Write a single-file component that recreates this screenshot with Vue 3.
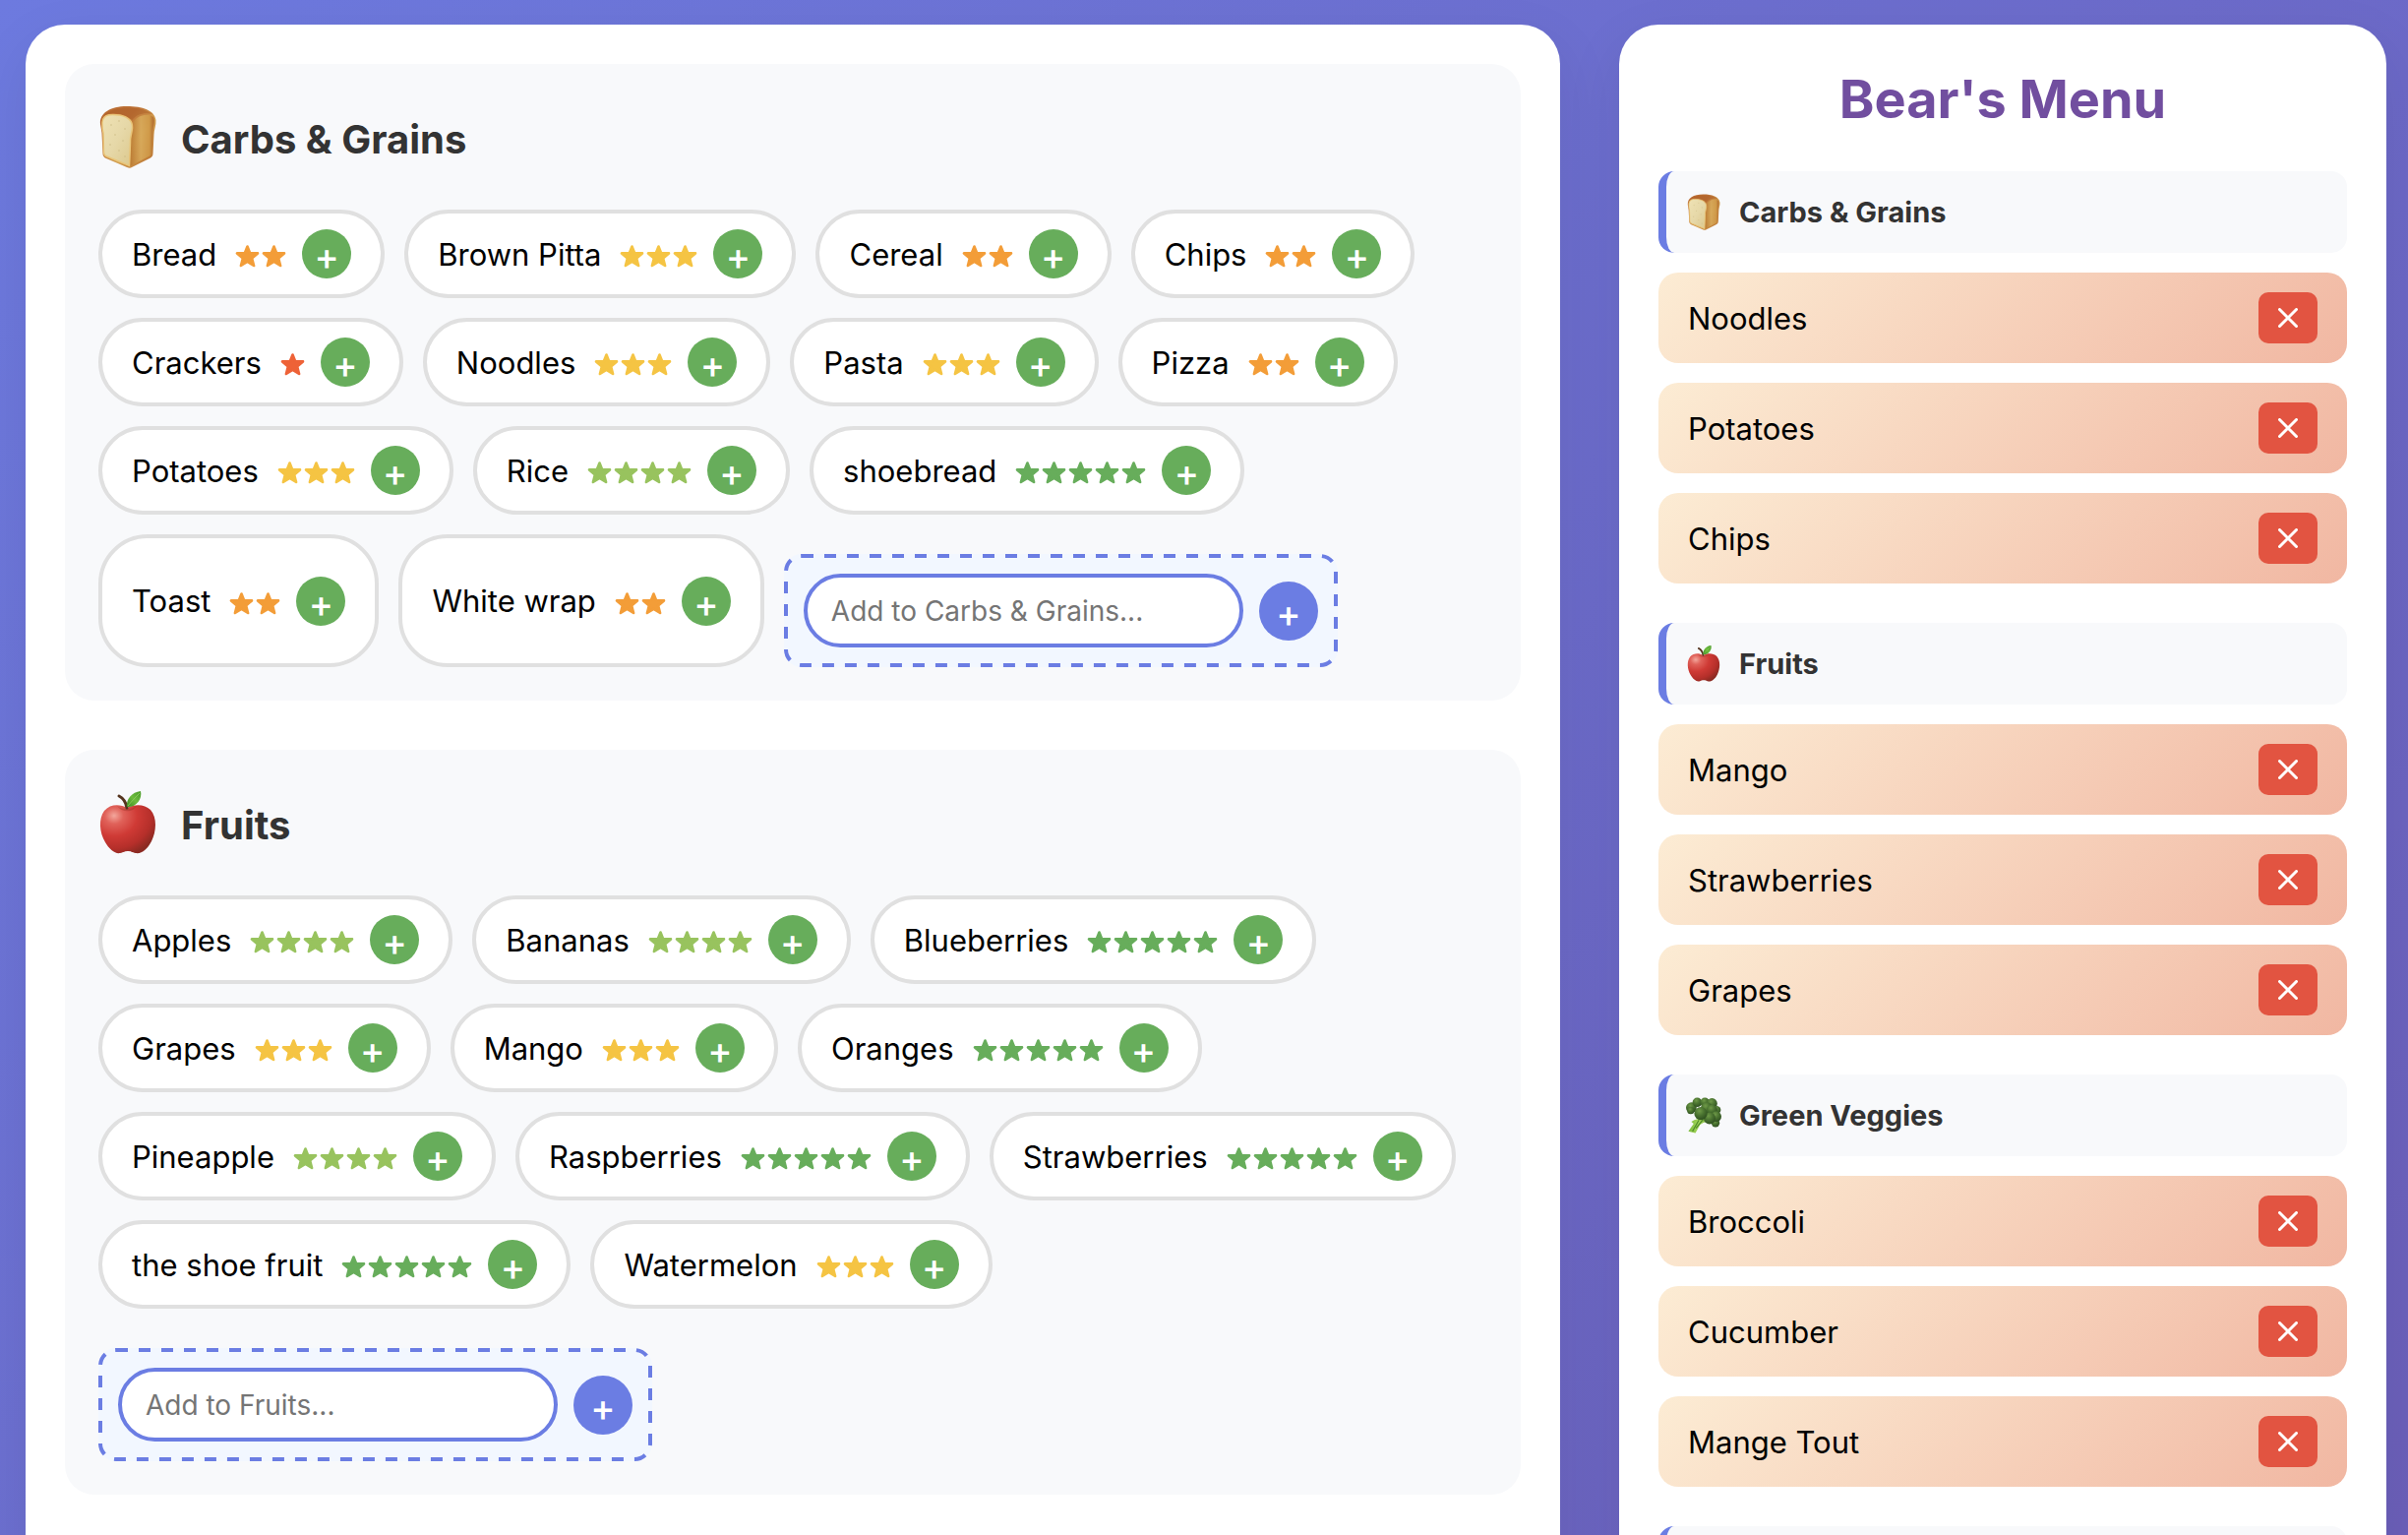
<script setup>
const categories = [
  {
    id: 'carbs',
    name: 'Carbs & Grains',
    foods: [
      { name: 'Bread', stars: 2 },
      { name: 'Brown Pitta', stars: 3 },
      { name: 'Cereal', stars: 2 },
      { name: 'Chips', stars: 2 },
      { name: 'Crackers', stars: 1 },
      { name: 'Noodles', stars: 3 },
      { name: 'Pasta', stars: 3 },
      { name: 'Pizza', stars: 2 },
      { name: 'Potatoes', stars: 3 },
      { name: 'Rice', stars: 4 },
      { name: 'shoebread', stars: 5 },
      { name: 'Toast', stars: 2 },
      { name: 'White wrap', stars: 2 },
    ],
  },
  {
    id: 'fruits',
    name: 'Fruits',
    foods: [
      { name: 'Apples', stars: 4 },
      { name: 'Bananas', stars: 4 },
      { name: 'Blueberries', stars: 5 },
      { name: 'Grapes', stars: 3 },
      { name: 'Mango', stars: 3 },
      { name: 'Oranges', stars: 5 },
      { name: 'Pineapple', stars: 4 },
      { name: 'Raspberries', stars: 5 },
      { name: 'Strawberries', stars: 5 },
      { name: 'the shoe fruit', stars: 5 },
      { name: 'Watermelon', stars: 3 },
    ],
  },
]

const menu = [
  { id: 'carbs', name: 'Carbs & Grains', items: ['Noodles', 'Potatoes', 'Chips'] },
  { id: 'fruits', name: 'Fruits', items: ['Mango', 'Strawberries', 'Grapes'] },
  { id: 'greens', name: 'Green Veggies', items: ['Broccoli', 'Cucumber', 'Mange Tout'] },
]
</script>

<template>
  <svg class="sprite" aria-hidden="true">
    <defs>
      <linearGradient id="crust" x1="0" y1="0" x2="1" y2="1">
        <stop offset="0" stop-color="#b9692f" />
        <stop offset="0.35" stop-color="#bd7236" />
        <stop offset="0.6" stop-color="#d3a050" />
        <stop offset="1" stop-color="#b4682a" />
      </linearGradient>
      <linearGradient id="crustSide" x1="0" y1="0" x2="1" y2="0">
        <stop offset="0" stop-color="#b8762f" />
        <stop offset="0.45" stop-color="#d8ab5c" />
        <stop offset="0.8" stop-color="#d09a48" />
        <stop offset="1" stop-color="#a95f28" />
      </linearGradient>
      <linearGradient id="crumb" x1="0" y1="0" x2="1" y2="1">
        <stop offset="0" stop-color="#efe2b4" />
        <stop offset="0.5" stop-color="#e6d8a8" />
        <stop offset="1" stop-color="#dcc88c" />
      </linearGradient>
      <radialGradient id="appleSkin" cx="0.25" cy="0.22" r="0.85">
        <stop offset="0" stop-color="#f3a79c" />
        <stop offset="0.2" stop-color="#e0625a" />
        <stop offset="0.5" stop-color="#cf3a35" />
        <stop offset="0.8" stop-color="#b52f2a" />
        <stop offset="1" stop-color="#8c2a22" />
      </radialGradient>
      <linearGradient id="leaf" x1="0" y1="1" x2="1" y2="0">
        <stop offset="0" stop-color="#3f8a24" />
        <stop offset="0.5" stop-color="#6cbb3c" />
        <stop offset="1" stop-color="#4a9a2a" />
      </linearGradient>
      <radialGradient id="floret" cx="0.4" cy="0.3" r="0.7">
        <stop offset="0" stop-color="#6f9a48" />
        <stop offset="0.5" stop-color="#4a7330" />
        <stop offset="1" stop-color="#2f5020" />
      </radialGradient>
      <linearGradient id="stalk" x1="0" y1="0" x2="1" y2="0">
        <stop offset="0" stop-color="#7cba3c" />
        <stop offset="0.5" stop-color="#a8d85c" />
        <stop offset="1" stop-color="#5c9a2c" />
      </linearGradient>
    </defs>
    <symbol id="icon-carbs" viewBox="0 0 58 64">
      <path d="M1 19C0 8 11 1 28 1C44 1 56 5 57.500 15C58 20 55.500 25 55.500 30L54.500 49C54.500 52 53 53 50 54.500L32 63.500Q30.500 64 28 63L7 54Q3.500 52.500 3.500 49L2.500 28Z" fill="url(#crust)" />
      <path d="M34 18C37 24 32 30 32 36L31 62L52 51Q53.500 50 53.500 47L54.500 27C54.500 21 57 17 55 12C49 8 38 10 34 18Z" fill="url(#crustSide)" opacity="0.85" />
      <path d="M3 17C4 8 14 9 21 10C30 12 34 16 33.500 23C33 29 31 32 31.500 38L30.500 61.500L7.500 52Q4.500 51 4.500 47L4 28C2.500 23 3 20 3 17Z" fill="url(#crumb)" stroke="#e9c579" stroke-width="1.500" />
      <path d="M5 10C14 1 42 0 54 9C44 7 37 10 33.500 15C26 8 13 6 5 10Z" fill="#a85a26" opacity="0.45" />
      <g fill="#cdbb84" opacity="0.5">
        <circle cx="12" cy="20" r="1" /><circle cx="20" cy="16" r="1" /><circle cx="26" cy="24" r="1" />
        <circle cx="16" cy="30" r="1" /><circle cx="24" cy="36" r="1" /><circle cx="11" cy="40" r="1" />
        <circle cx="20" cy="46" r="1" /><circle cx="26" cy="52" r="1" />
      </g>
    </symbol>
    <symbol id="icon-fruits" viewBox="1 0 58 64">
      <path d="M29 17C22 13 12 13 6 20C0 28 1 42 7 52C11 59 17 64 22 63C26 62 27 61 30 61C33 61 34 62 38 63C44 64 50 59 54 51C59 41 60 27 53 19C47 13 37 13 29 17Z" fill="url(#appleSkin)" />
      <path d="M19 15C23 19 35 19 39 15C35 22 24 22 19 15Z" fill="#8e2a22" opacity="0.35" />
      <path d="M29 17C28 11 25 7 21 5" fill="none" stroke="#55341f" stroke-width="3" stroke-linecap="round" />
      <path d="M29 16C28 8 34 1 43 0C45 8 38 17 29 16Z" fill="url(#leaf)" />
      <path d="M30 15C34 10 38 6 42 2" fill="none" stroke="#9ad466" stroke-width="1" opacity="0.7" />
    </symbol>
    <symbol id="icon-greens" viewBox="0 0 60 60">
      <path d="M26 34L14 38L9 41L13 44L4 57L16 60L24 46L30 42L42 40Z" fill="url(#stalk)" />
      <path d="M22 38L11 57M29 37L17 52" stroke="#4c8a26" stroke-width="2" fill="none" />
      <g fill="url(#floret)">
        <circle cx="9" cy="17" r="9" /><circle cx="19" cy="8" r="8" /><circle cx="32" cy="8" r="8" />
        <circle cx="44" cy="10" r="9" /><circle cx="52" cy="21" r="7" /><circle cx="35" cy="18" r="10" />
        <circle cx="44" cy="21" r="9" /><circle cx="50" cy="43" r="7" /><circle cx="51" cy="32" r="9" />
        <circle cx="40" cy="35" r="10" /><circle cx="25" cy="27" r="11" /><circle cx="8" cy="22" r="6" />
      </g>
    </symbol>
    <symbol id="icon-star" viewBox="0 0 24 24">
      <path d="M12 2.500L14.600 9L22.500 9.400L16.600 14.400L18.600 22L12 17.900L5.400 22L7.400 14.400L1.500 9.400L9.400 9Z" fill="currentColor" stroke="currentColor" stroke-width="2.600" stroke-linejoin="round" />
    </symbol>
  </svg>

  <div class="page">
    <main class="panel">
      <section v-for="cat in categories" :key="cat.id" class="category">
        <h2 class="category-title">
          <svg class="category-icon" aria-hidden="true"><use :href="'#icon-' + cat.id" /></svg>
          {{ cat.name }}
        </h2>
        <div class="foods">
          <div v-for="food in cat.foods" :key="food.name" class="food">
            <span>{{ food.name }}</span>
            <span class="stars" :class="'stars-' + food.stars" role="img" :aria-label="food.stars + ' stars'">
              <svg v-for="n in food.stars" :key="n" class="star"><use href="#icon-star" /></svg>
            </span>
            <button type="button" class="round add" :aria-label="'Add ' + food.name">+</button>
          </div>
          <form class="new-food" @submit.prevent>
            <svg class="outline" aria-hidden="true"><rect x="2" y="2" rx="16" /></svg>
            <input type="text" :placeholder="'Add to ' + cat.name + '...'" :aria-label="'Add to ' + cat.name" />
            <button type="submit" class="round create" aria-label="Create">+</button>
          </form>
        </div>
      </section>
    </main>

    <aside class="panel">
      <h1 class="menu-title">Bear's Menu</h1>
      <section v-for="group in menu" :key="group.id" class="group">
        <h3 class="group-title">
          <svg class="group-icon" aria-hidden="true"><use :href="'#icon-' + group.id" /></svg>
          {{ group.name }}
        </h3>
        <div v-for="item in group.items" :key="item" class="menu-item">
          <span>{{ item }}</span>
          <button type="button" class="remove" :aria-label="'Remove ' + item">
            <svg viewBox="0 0 20 20" aria-hidden="true"><path d="M1.500 1.500L18.500 18.500M18.500 1.500L1.500 18.500" /></svg>
          </button>
        </div>
      </section>
      <div class="group-title"></div>
    </aside>
  </div>
</template>

<style>
html,
body {
  margin: 0;
  overflow: hidden;
}
</style>

<style scoped>
* {
  box-sizing: border-box;
}
.sprite {
  position: absolute;
  width: 0;
  height: 0;
}
.page {
  display: grid;
  grid-template-columns: 2fr 1fr;
  gap: 60px;
  height: 100vh;
  padding: 25px 22px 0 26px;
  overflow: hidden;
  background: linear-gradient(135deg, #6d7adf, #6b5fb9);
  color: #000;
  font-family: Inter, "Liberation Sans", sans-serif;
  font-size: 31px;
}
.panel {
  min-width: 0;
  padding: 40px;
  background: #fff;
  border-radius: 40px 40px 0 0;
  box-shadow: 0 20px 60px rgba(0, 0, 0, 0.08);
}
.category {
  padding: 34px;
  margin-bottom: 50px;
  background: #f8f9fb;
  border-radius: 30px;
}
.category-title {
  display: flex;
  align-items: center;
  gap: 24px;
  height: 84px;
  margin: 0 0 30px;
  color: #333;
  font-size: 40px;
  font-weight: 700;
}
.category-icon {
  width: 60px;
  height: 64px;
  margin-bottom: 4px;
}
.foods {
  display: flex;
  flex-wrap: wrap;
  gap: 20px;
}
.food {
  display: flex;
  align-items: center;
  gap: 16px;
  padding: 16px 30px;
  background: #fff;
  border: 4px solid #e0e0e0;
  border-radius: 50px;
}
.stars {
  display: flex;
  gap: 2px;
  padding: 4px 0 0 3px;
}
.stars-1 {
  color: #ee6237;
}
.stars-2 {
  color: #f39d38;
}
.stars-3 {
  color: #f5c443;
}
.stars-4 {
  color: #98c35e;
}
.stars-5 {
  color: #67ad5b;
}
.star {
  width: 25px;
  height: 24px;
}
.round {
  display: flex;
  align-items: center;
  justify-content: center;
  flex: none;
  padding: 4px 0 0;
  border: 0;
  border-radius: 50%;
  color: #fff;
  font-family: inherit;
  font-size: 38px;
  font-weight: 500;
  line-height: 1;
}
.add {
  width: 50px;
  height: 50px;
  background: #67ad5b;
}
.create {
  width: 60px;
  height: 60px;
  background: #6b7de3;
}
.new-food {
  position: relative;
  display: flex;
  align-items: center;
  gap: 16px;
  margin-top: 20px;
  padding: 20px;
  background: #f2f7ff;
  border-radius: 18px;
}
.outline {
  position: absolute;
  inset: 0;
  width: 100%;
  height: 100%;
  pointer-events: none;
}
.outline rect {
  width: calc(100% - 4px);
  height: calc(100% - 4px);
  fill: none;
  stroke: #6b7de3;
  stroke-width: 4;
  stroke-dasharray: 12 11;
}
.new-food input {
  width: 447px;
  height: 75px;
  padding: 0 24px;
  background: #fff;
  border: 4px solid #6b7de3;
  border-radius: 40px;
  font-family: inherit;
  font-size: 28px;
}
.new-food input::placeholder {
  color: #757575;
}
.menu-title {
  height: 69px;
  margin: 0 0 40px;
  color: #714e9f;
  font-size: 54px;
  font-weight: 700;
  line-height: 72px;
  text-align: center;
}
.group {
  display: flex;
  flex-direction: column;
  gap: 20px;
  margin-bottom: 40px;
}
.group-title {
  display: flex;
  align-items: center;
  gap: 18px;
  height: 83px;
  margin: 0;
  padding: 0 20px;
  background: #f8f9fb;
  border-left: 8px solid #6b7de3;
  border-radius: 16px;
  color: #333;
  font-size: 29px;
  font-weight: 700;
}
.group-icon {
  width: 36px;
  height: 37px;
}
.menu-item {
  display: flex;
  align-items: center;
  justify-content: space-between;
  height: 92px;
  padding: 0 30px;
  background: linear-gradient(135deg, #fcecd4, #f1b7a2);
  border-radius: 20px;
}
.remove {
  display: flex;
  align-items: center;
  justify-content: center;
  width: 60px;
  height: 52px;
  padding: 0;
  background: #e25441;
  border: 0;
  border-radius: 10px;
}
.remove svg {
  width: 20px;
  height: 20px;
  fill: none;
  stroke: #fff;
  stroke-width: 3;
  stroke-linecap: round;
}
</style>
